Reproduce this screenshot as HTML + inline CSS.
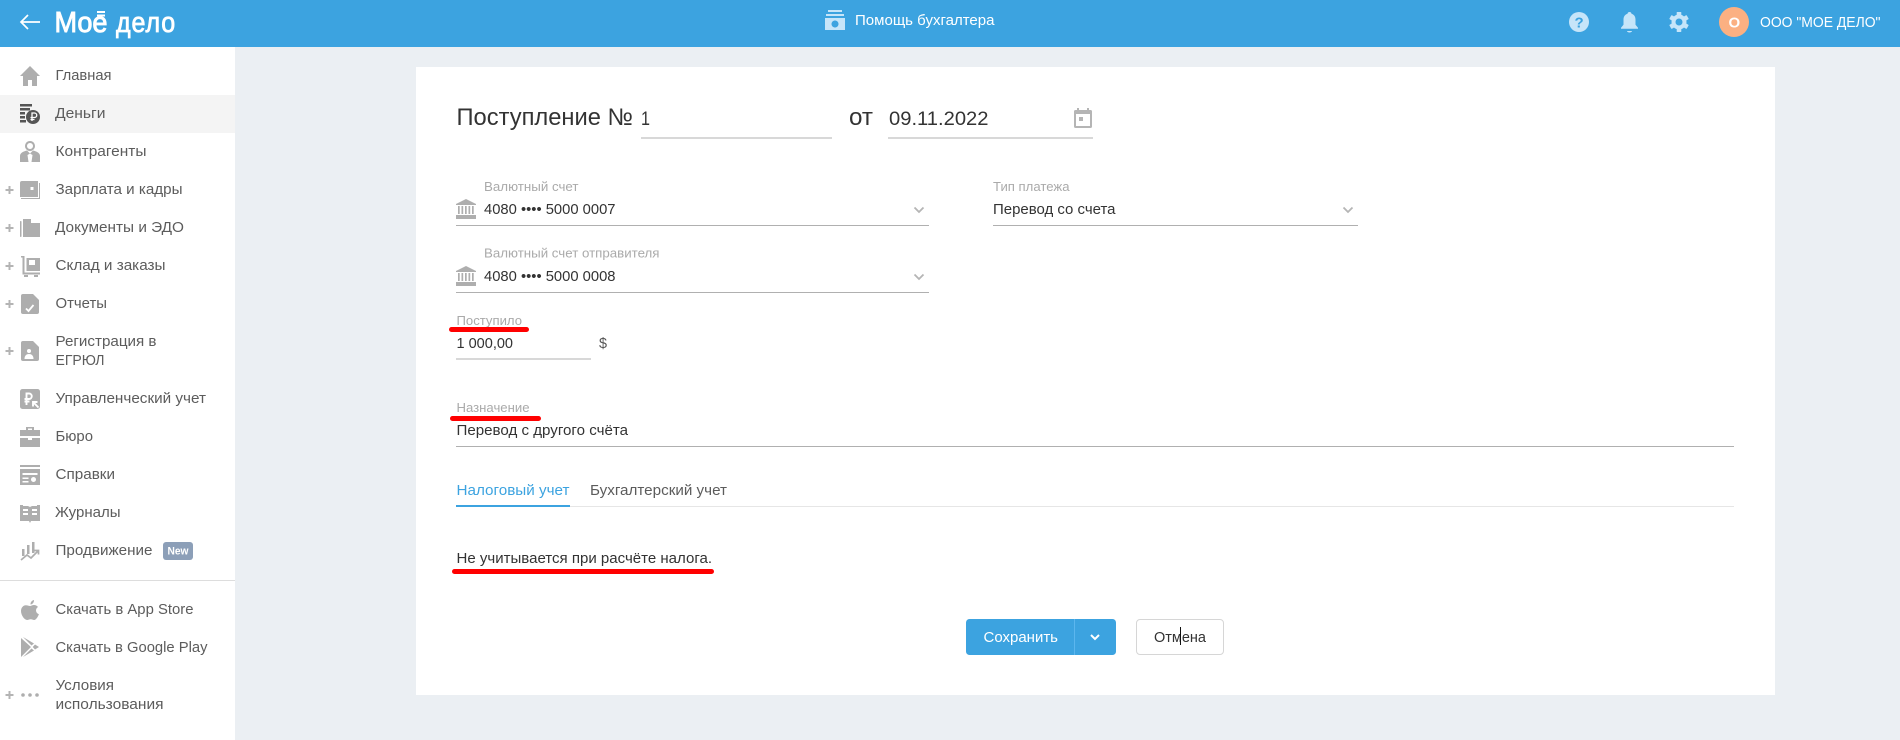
<!DOCTYPE html>
<html lang="ru"><head><meta charset="utf-8"><title>Поступление</title>
<style>
html,body{margin:0;padding:0;width:1900px;height:740px;overflow:hidden;background:#ebeff3}
svg{display:block}
text{font-family:"Liberation Sans",sans-serif;font-size:15px;fill:#5c5c5c}
.v{fill:#333}.l{font-size:13px;fill:#aaa}.w{fill:#fff}.i{fill:#aeaeae}.h{fill:#c6e5f9}
</style></head><body>
<svg width="1900" height="740" viewBox="0 0 1900 740" xmlns="http://www.w3.org/2000/svg">
<rect width="1900" height="740" fill="#ebeff3"/>
<rect width="1900" height="47" fill="#3ca3e0"/>
<rect y="47" width="235" height="693" fill="#fff"/>
<rect y="95" width="235" height="38" fill="#f4f4f4"/>
<rect y="580" width="235" height="1" fill="#ddd"/>
<rect x="416" y="67" width="1359" height="628" fill="#fff"/>

<!-- header -->
<path d="M40 22H21M28 15l-7 7 7 7" fill="none" stroke="#fff" stroke-width="1.700"/>
<text x="54.500" y="32" class="w" style="font-size:29px;stroke:#fff;stroke-width:.9" textLength="53" lengthAdjust="spacingAndGlyphs">Мое</text>
<rect x="97" y="11" width="8" height="2" fill="#fff"/><rect x="97" y="14.500" width="8" height="2" fill="#fff"/>
<text x="116" y="32" class="w" style="font-size:29px;stroke:#fff;stroke-width:.8;letter-spacing:1px" textLength="60" lengthAdjust="spacingAndGlyphs">дело</text>
<g class="h"><rect x="828" y="10" width="14" height="2"/><rect x="826" y="14" width="18" height="2"/>
<path fill-rule="evenodd" d="M825 18h20v12h-20zM835 20.500a3.500 3.500 0 1 0 .01 0z"/></g>
<text x="855" y="25" class="w" textLength="139.500" lengthAdjust="spacingAndGlyphs">Помощь бухгалтера</text>
<circle cx="1579" cy="22" r="10" class="h"/>
<text x="1574.500" y="27.500" style="font-size:15px;font-weight:700;fill:#3ca3e0">?</text>
<path class="h" d="M1629.500 12c1.200 0 2 .8 2 1.800 2.700.8 4 3 4 6v5l2.500 3v1h-17v-1l2.500-3v-5c0-3 1.300-5.200 4-6 0-1 .8-1.800 2-1.800zM1627 31h5a2.500 1.500 0 0 1-5 0z"/>
<g transform="translate(1679 22)" fill="#c6e5f9">
<rect x="-2.300" y="-10" width="4.600" height="5" rx=".6"/>
<rect x="-2.300" y="-10" width="4.600" height="5" rx=".6" transform="rotate(60)"/>
<rect x="-2.300" y="-10" width="4.600" height="5" rx=".6" transform="rotate(120)"/>
<rect x="-2.300" y="-10" width="4.600" height="5" rx=".6" transform="rotate(180)"/>
<rect x="-2.300" y="-10" width="4.600" height="5" rx=".6" transform="rotate(240)"/>
<rect x="-2.300" y="-10" width="4.600" height="5" rx=".6" transform="rotate(300)"/>
<circle r="5.500" fill="none" stroke="#c6e5f9" stroke-width="4"/></g>
<circle cx="1734" cy="22" r="15" fill="#fbb082"/>
<text x="1728.500" y="27.500" class="w" style="font-weight:700">О</text>
<text x="1760" y="27" class="w" textLength="120.500" lengthAdjust="spacingAndGlyphs">ООО "МОЕ ДЕЛО"</text>

<!-- sidebar text -->
<text x="55.500" y="80" textLength="56" lengthAdjust="spacingAndGlyphs">Главная</text>
<text x="55" y="118" textLength="50.500" lengthAdjust="spacingAndGlyphs">Деньги</text>
<text x="55.500" y="156" textLength="91" lengthAdjust="spacingAndGlyphs">Контрагенты</text>
<text x="55.500" y="194" textLength="127" lengthAdjust="spacingAndGlyphs">Зарплата и кадры</text>
<text x="55" y="232" textLength="129" lengthAdjust="spacingAndGlyphs">Документы и ЭДО</text>
<text x="55.500" y="270" textLength="110" lengthAdjust="spacingAndGlyphs">Склад и заказы</text>
<text x="55.500" y="308" textLength="51.500" lengthAdjust="spacingAndGlyphs">Отчеты</text>
<text x="55.500" y="346" textLength="101" lengthAdjust="spacingAndGlyphs">Регистрация в</text>
<text x="55.500" y="365" textLength="49" lengthAdjust="spacingAndGlyphs">ЕГРЮЛ</text>
<text x="55.500" y="403" textLength="150.500" lengthAdjust="spacingAndGlyphs">Управленческий учет</text>
<text x="55.500" y="441" textLength="37.500" lengthAdjust="spacingAndGlyphs">Бюро</text>
<text x="55.500" y="479" textLength="59.500" lengthAdjust="spacingAndGlyphs">Справки</text>
<text x="55" y="517" textLength="65.500" lengthAdjust="spacingAndGlyphs">Журналы</text>
<text x="55.500" y="555" textLength="97" lengthAdjust="spacingAndGlyphs">Продвижение</text>
<rect x="163" y="542" width="30" height="18" rx="3" fill="#8c9fb8"/>
<text x="167.500" y="554.500" class="w" style="font-size:11px;font-weight:700" textLength="21" lengthAdjust="spacingAndGlyphs">New</text>
<text x="55.500" y="614" textLength="138" lengthAdjust="spacingAndGlyphs">Скачать в App Store</text>
<text x="55.500" y="652" textLength="152" lengthAdjust="spacingAndGlyphs">Скачать в Google Play</text>
<text x="55.500" y="690" textLength="58.500" lengthAdjust="spacingAndGlyphs">Условия</text>
<text x="55.500" y="709" textLength="108" lengthAdjust="spacingAndGlyphs">использования</text>

<!-- plus signs -->
<g fill="#b4b4b4">
<path d="M5.500 189h8v2h-8zM8.500 186h2v8h-2z"/>
<path d="M5.500 227h8v2h-8zM8.500 224h2v8h-2z"/>
<path d="M5.500 265h8v2h-8zM8.500 262h2v8h-2z"/>
<path d="M5.500 303h8v2h-8zM8.500 300h2v8h-2z"/>
<path d="M5.500 350h8v2h-8zM8.500 347h2v8h-2z"/>
<path d="M5.500 694h8v2h-8zM8.500 691h2v8h-2z"/>
</g>

<!-- sidebar icons -->
<path class="i" d="M30 66l10 10h-3v10h-5v-6h-4v6h-5V76h-3z"/>
<g fill="#555"><rect x="20" y="104" width="12" height="2.500"/><rect x="20" y="108" width="10" height="2.500"/><rect x="20" y="112" width="5" height="2.500"/><rect x="20" y="116" width="5" height="2.500"/><rect x="20" y="120" width="6" height="2.500"/><circle cx="33" cy="117" r="7"/></g>
<path d="M32 121v-8h2.500a2 2 0 0 1 0 4.500H30.500M30.500 119.500h4" fill="none" stroke="#fff" stroke-width="1.300"/>
<path class="i" fill-rule="evenodd" d="M30 141a5 5 0 1 1-.01 0zM30 143a3 3 0 1 0 .01 0zM20 162v-6c0-3 3-4.500 7-5.500l3 3 3-3c4 1 7 2.500 7 5.500v6H31.500l1-7-2.500-1.500-2.500 1.500 1 7z"/>
<path class="i" fill-rule="evenodd" d="M22 181h16v16H20v-14a2 2 0 0 1 2-2zM30.500 187v3h3v-3z"/>
<path class="i" d="M39 183h1v16H21v-1h18z"/>
<rect x="20" y="221" width="1.500" height="16" rx=".7" class="i"/>
<path class="i" d="M23 219h8v4h9v14H23z"/>
<path class="i" fill-rule="evenodd" d="M21 256h3.500v16.500H40v2H22.500V257.500H21zM26.500 258H40v13H26.500zM29 260v5h6v-5zM24 275h4v2h-4zM34 275h4v2h-4z"/>
<path class="i" d="M23 294h10l6 6v12a2 2 0 0 1-2 2H23a2 2 0 0 1-2-2v-16a2 2 0 0 1 2-2z"/>
<path d="M26 308.500l2.500 2.500 5-6" fill="none" stroke="#fff" stroke-width="1.800"/>
<path class="i" d="M23 341h10l6 6v12a2 2 0 0 1-2 2H23a2 2 0 0 1-2-2v-16a2 2 0 0 1 2-2z"/>
<circle cx="29" cy="351" r="2" fill="#fff"/><path d="M24.500 359c0-3.500 2-5 4.500-5s4.500 1.500 4.500 5z" fill="#fff"/>
<rect x="20" y="389" width="20" height="20" rx="2.500" class="i"/>
<path d="M26.500 405v-11.500h2.500a2.750 2.750 0 0 1 0 5.500H24.500M24.500 401.500h5M38.500 407.500l-5-5M33 406.500V402h4.500" fill="none" stroke="#fff" stroke-width="1.900"/>
<path class="i" d="M26 427h8v3h6v6H20v-6h6zM20 438h8v2h4v-2h8v9H20z"/><rect x="28" y="428.500" width="4" height="1.500" fill="#fff"/>
<path class="i" fill-rule="evenodd" d="M20 465h20v2H20zM20 469h20v16H20zM22.500 473v2h15v-2zM22.500 477.500v1.500h6v-1.500zM22.500 481v1.500h6V481zM33.500 477a2.500 2.500 0 1 0 .01 0z"/>
<path class="i" fill-rule="evenodd" d="M20 505h3v1h5l2 1 2-1h5v-1h3v16H31l-1 2-1-2H20zM23 509v2h5v-2zM23 513v2h5v-2zM32 509v2h5v-2zM32 513v2h5v-2z"/>
<g class="i"><rect x="22" y="549" width="2.500" height="7"/><rect x="27" y="545" width="2.500" height="9"/><rect x="32" y="542" width="2.500" height="11"/></g>
<path d="M21 560l6-5 4 3 7-7M34 550.500h4.500v4" fill="none" stroke="#aeaeae" stroke-width="1.700"/>
<path class="i" d="M30.500 604.500c-.2-2.200 1.500-4.200 3.500-4.500.2 2.300-1.500 4.400-3.500 4.500zM30 606c1 0 2.300-1 4-1 1.500 0 3 .7 4 2-3 1.800-2.500 6 .9 7.300-1 2.700-3 5.700-4.700 5.700-1.300 0-2-.8-3.500-.8s-2.300.8-3.500.8C24.300 620 21 615 21 611c0-3.500 2.400-5.800 4.800-5.800 1.700 0 3.200.8 4.200.8z"/>
<path class="i" d="M21 638l10 9-10 10zM23 637l11 6.500-2.500 2zM23 657l11-6.500-2.500-2zM35 644.500l4 2.500-4 2.500-2.300-2.500z"/>
<g fill="#aeaeae"><circle cx="23" cy="695" r="1.800"/><circle cx="30" cy="695" r="1.800"/><circle cx="37" cy="695" r="1.800"/></g>

<!-- form -->
<text x="456.500" y="125" style="font-size:24px;fill:#333" textLength="176.500" lengthAdjust="spacingAndGlyphs">Поступление №</text>
<text x="641" y="125" class="v" style="font-size:19px" textLength="9" lengthAdjust="spacingAndGlyphs">1</text>
<rect x="641" y="137.500" width="191" height="1" fill="#b0b0b0"/>
<text x="849" y="125" style="font-size:24px;fill:#333" textLength="24" lengthAdjust="spacingAndGlyphs">от</text>
<text x="889" y="125" class="v" style="font-size:19px" textLength="99.500" lengthAdjust="spacingAndGlyphs">09.11.2022</text>
<rect x="888" y="137.500" width="205" height="1" fill="#b0b0b0"/>
<path fill="#b5b5b5" fill-rule="evenodd" d="M1077 108h2v2h8v-2h2v2h1.500a1.500 1.500 0 0 1 1.500 1.500v15a1.500 1.500 0 0 1-1.500 1.500h-15a1.500 1.500 0 0 1-1.500-1.500v-15a1.500 1.500 0 0 1 1.500-1.500h1.500zM1076 114v12h14v-12zM1079 117h4v4h-4z"/>

<g fill="#aeaeae"><path d="M466 199l10 5v1h-20v-1z"/><rect x="458" y="206" width="1.700" height="8"/><rect x="461.500" y="206" width="1.700" height="8"/><rect x="465" y="206" width="1.700" height="8"/><rect x="468.500" y="206" width="1.700" height="8"/><rect x="472" y="206" width="1.700" height="8"/><rect x="456" y="215" width="20" height="4"/></g>
<text x="484" y="191" class="l" textLength="94.500" lengthAdjust="spacingAndGlyphs">Валютный счет</text>
<text x="484" y="214" class="v" textLength="131.500" lengthAdjust="spacingAndGlyphs">4080 •••• 5000 0007</text>
<path d="M914.500 207.500l4.500 4.500 4.500-4.500" fill="none" stroke="#b5b5b5" stroke-width="1.800"/>
<rect x="456" y="225" width="473" height="1" fill="#b0b0b0"/>

<text x="993" y="191" class="l" textLength="76.500" lengthAdjust="spacingAndGlyphs">Тип платежа</text>
<text x="993" y="214" class="v" textLength="122.500" lengthAdjust="spacingAndGlyphs">Перевод со счета</text>
<path d="M1343.500 207.500l4.500 4.500 4.500-4.500" fill="none" stroke="#b5b5b5" stroke-width="1.800"/>
<rect x="993" y="225" width="365" height="1" fill="#b0b0b0"/>

<g fill="#aeaeae"><path d="M466 266l10 5v1h-20v-1z"/><rect x="458" y="273" width="1.700" height="8"/><rect x="461.500" y="273" width="1.700" height="8"/><rect x="465" y="273" width="1.700" height="8"/><rect x="468.500" y="273" width="1.700" height="8"/><rect x="472" y="273" width="1.700" height="8"/><rect x="456" y="282" width="20" height="4"/></g>
<text x="484" y="257.500" class="l" textLength="175.500" lengthAdjust="spacingAndGlyphs">Валютный счет отправителя</text>
<text x="484" y="281" class="v" textLength="131.500" lengthAdjust="spacingAndGlyphs">4080 •••• 5000 0008</text>
<path d="M914.500 274.500l4.500 4.500 4.500-4.500" fill="none" stroke="#b5b5b5" stroke-width="1.800"/>
<rect x="456" y="292" width="473" height="1" fill="#b0b0b0"/>

<text x="456.500" y="325" class="l" textLength="65.500" lengthAdjust="spacingAndGlyphs">Поступило</text>
<rect x="449" y="327" width="80" height="5" rx="2.500" fill="#f00"/>
<text x="456.500" y="348" class="v" textLength="56.500" lengthAdjust="spacingAndGlyphs">1 000,00</text>
<text x="599" y="348" style="fill:#555" textLength="8" lengthAdjust="spacingAndGlyphs">$</text>
<rect x="456" y="358.500" width="135" height="1" fill="#b0b0b0"/>

<text x="456.500" y="412" class="l" textLength="73" lengthAdjust="spacingAndGlyphs">Назначение</text>
<rect x="450" y="416" width="91" height="5" rx="2.500" fill="#f00"/>
<text x="456.500" y="435" class="v" textLength="171.500" lengthAdjust="spacingAndGlyphs">Перевод с другого счёта</text>
<rect x="456" y="446" width="1278" height="1" fill="#b0b0b0"/>

<text x="456.500" y="495" style="fill:#3ca3e0" textLength="113" lengthAdjust="spacingAndGlyphs">Налоговый учет</text>
<text x="590" y="495" textLength="137" lengthAdjust="spacingAndGlyphs">Бухгалтерский учет</text>
<rect x="456" y="506" width="1278" height="1" fill="#e6e6e6"/>
<rect x="456" y="505" width="114" height="2" fill="#3ca3e0"/>

<text x="456.500" y="563" style="fill:#333" textLength="255.500" lengthAdjust="spacingAndGlyphs">Не учитывается при расчёте налога.</text>
<rect x="452" y="569" width="262" height="5" rx="2.500" fill="#f00"/>

<rect x="966" y="619" width="150" height="36" rx="3.500" fill="#3ca3e0"/>
<rect x="1074" y="619" width="1" height="36" fill="#5cb6ee"/>
<text x="983.500" y="642" class="w" textLength="74.500" lengthAdjust="spacingAndGlyphs">Сохранить</text>
<path d="M1091 635l4 4 4-4" fill="none" stroke="#fff" stroke-width="2"/>
<rect x="1136.500" y="619.500" width="87" height="35" rx="3.500" fill="#fff" stroke="#d6d6d6"/>
<text x="1154" y="642" class="v" textLength="52" lengthAdjust="spacingAndGlyphs">Отмена</text>
<rect x="1180" y="627" width="1" height="18" fill="#111"/>
</svg>
</body></html>
